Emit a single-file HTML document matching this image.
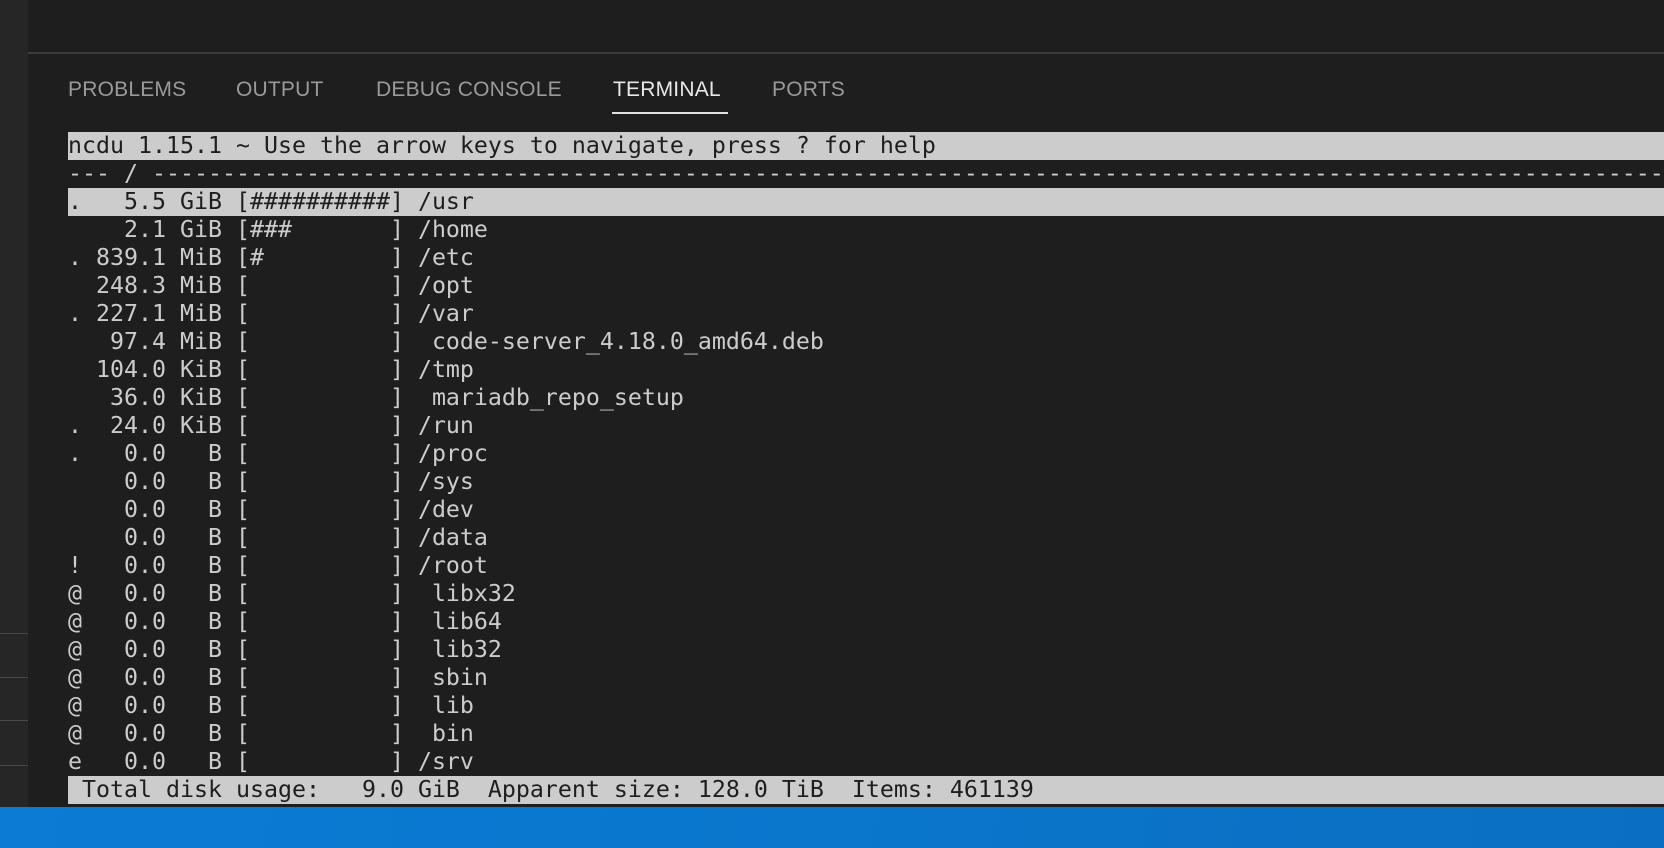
<!DOCTYPE html>
<html><head><meta charset="utf-8"><style>
html,body{margin:0;padding:0;width:1664px;height:848px;overflow:hidden;background:#1e1e1e;}
.side{position:absolute;left:0;top:0;width:28px;height:807px;background:#262626;}
.side i{position:absolute;left:0;width:28px;height:1px;background:#474747;}
.topline{position:absolute;left:28px;top:52px;right:0;height:2px;background:#3c3c3c;}
.tab{position:absolute;top:78px;font:21px "Liberation Sans",sans-serif;color:#9a9a9a;letter-spacing:0.2px;}
.tab.act{color:#e8e8e8;}
.ul{position:absolute;left:612px;top:112px;width:116px;height:2px;background:#e0e0e0;}
.term{position:absolute;left:68px;top:132px;right:0;font:23.25px "DejaVu Sans Mono","Liberation Mono",monospace;color:#cccccc;}
.l{height:28px;line-height:28px;white-space:pre;overflow:hidden;}
.h{background:#cccccc;color:#1e1e1e;}
.blue{position:absolute;left:0;top:807px;width:1664px;height:41px;background:linear-gradient(100deg,#0b7bd4 0%,#0a76cc 50%,#0a6fc0 100%);}
</style></head><body>
<div class="side"><i style="top:633px"></i><i style="top:677px"></i><i style="top:720px"></i><i style="top:765px"></i></div>
<div class="topline"></div>
<div class="tab" style="left:68px">PROBLEMS</div>
<div class="tab" style="left:236px">OUTPUT</div>
<div class="tab" style="left:376px">DEBUG CONSOLE</div>
<div class="tab act" style="left:613px">TERMINAL</div>
<div class="tab" style="left:772px">PORTS</div>
<div class="ul"></div>
<div class="term">
<div class="l h">ncdu 1.15.1 ~ Use the arrow keys to navigate, press ? for help</div>
<div class="l">--- / ----------------------------------------------------------------------------------------------------------------------------</div>
<div class="l h">.   5.5 GiB [##########] /usr</div>
<div class="l">    2.1 GiB [###       ] /home</div>
<div class="l">. 839.1 MiB [#         ] /etc</div>
<div class="l">  248.3 MiB [          ] /opt</div>
<div class="l">. 227.1 MiB [          ] /var</div>
<div class="l">   97.4 MiB [          ]  code-server_4.18.0_amd64.deb</div>
<div class="l">  104.0 KiB [          ] /tmp</div>
<div class="l">   36.0 KiB [          ]  mariadb_repo_setup</div>
<div class="l">.  24.0 KiB [          ] /run</div>
<div class="l">.   0.0   B [          ] /proc</div>
<div class="l">    0.0   B [          ] /sys</div>
<div class="l">    0.0   B [          ] /dev</div>
<div class="l">    0.0   B [          ] /data</div>
<div class="l">!   0.0   B [          ] /root</div>
<div class="l">@   0.0   B [          ]  libx32</div>
<div class="l">@   0.0   B [          ]  lib64</div>
<div class="l">@   0.0   B [          ]  lib32</div>
<div class="l">@   0.0   B [          ]  sbin</div>
<div class="l">@   0.0   B [          ]  lib</div>
<div class="l">@   0.0   B [          ]  bin</div>
<div class="l">e   0.0   B [          ] /srv</div>
<div class="l h"> Total disk usage:   9.0 GiB  Apparent size: 128.0 TiB  Items: 461139</div>
</div>
<div class="blue"></div>
</body></html>
